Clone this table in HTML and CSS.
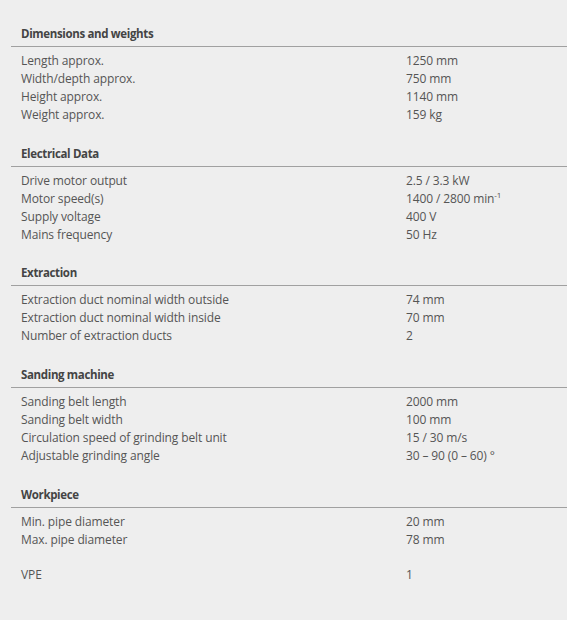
FILE: index.html
```html
<!DOCTYPE html>
<html>
<head>
<meta charset="utf-8">
<link rel="stylesheet" href="styles.css">
</head>
<body>
<div class="specs">
  <section class="group">
    <h3 class="group-title">Dimensions and weights</h3>
    <div class="rows">
      <div class="row"><span class="label">Length approx.</span><span class="value">1250 mm</span></div>
      <div class="row"><span class="label">Width/depth approx.</span><span class="value">750 mm</span></div>
      <div class="row"><span class="label">Height approx.</span><span class="value">1140 mm</span></div>
      <div class="row"><span class="label">Weight approx.</span><span class="value">159 kg</span></div>
    </div>
  </section>
  <section class="group">
    <h3 class="group-title">Electrical Data</h3>
    <div class="rows">
      <div class="row"><span class="label">Drive motor output</span><span class="value">2.5 / 3.3 kW</span></div>
      <div class="row"><span class="label">Motor speed(s)</span><span class="value">1400 / 2800 min<sup>-1</sup></span></div>
      <div class="row"><span class="label">Supply voltage</span><span class="value">400 V</span></div>
      <div class="row"><span class="label">Mains frequency</span><span class="value">50 Hz</span></div>
    </div>
  </section>
  <section class="group">
    <h3 class="group-title">Extraction</h3>
    <div class="rows">
      <div class="row"><span class="label">Extraction duct nominal width outside</span><span class="value">74 mm</span></div>
      <div class="row"><span class="label">Extraction duct nominal width inside</span><span class="value">70 mm</span></div>
      <div class="row"><span class="label">Number of extraction ducts</span><span class="value">2</span></div>
    </div>
  </section>
  <section class="group">
    <h3 class="group-title">Sanding machine</h3>
    <div class="rows">
      <div class="row"><span class="label">Sanding belt length</span><span class="value">2000 mm</span></div>
      <div class="row"><span class="label">Sanding belt width</span><span class="value">100 mm</span></div>
      <div class="row"><span class="label">Circulation speed of grinding belt unit</span><span class="value">15 / 30 m/s</span></div>
      <div class="row"><span class="label">Adjustable grinding angle</span><span class="value">30 – 90 (0 – 60) °</span></div>
    </div>
  </section>
  <section class="group">
    <h3 class="group-title">Workpiece</h3>
    <div class="rows">
      <div class="row"><span class="label">Min. pipe diameter</span><span class="value">20 mm</span></div>
      <div class="row"><span class="label">Max. pipe diameter</span><span class="value">78 mm</span></div>
    </div>
  </section>
  <div class="rows extra">
    <div class="row"><span class="label">VPE</span><span class="value">1</span></div>
  </div>
</div>
</body>
</html>
```
FILE: styles.css
```css
html, body {
  margin: 0;
  padding: 0;
  background: #eeeeee;
}
body {
  font-family: "Open Sans", "Liberation Sans", sans-serif;
  font-size: 12px;
  letter-spacing: -0.12px;
  color: #555555;
  line-height: 18px;
}
.specs {
  padding: 24px 0 40px 11px;
}
.group + .group {
  margin-top: 19.7px;
}
.group-title {
  margin: 0;
  padding: 1px 0 3px 10px;
  font-size: 11.5px;
  letter-spacing: -0.35px;
  font-weight: 700;
  line-height: 18px;
  color: #444444;
  border-bottom: 1px solid #a0a0a0;
}
.rows {
  padding: 5px 0 0 10px;
}
.row {
  display: grid;
  grid-template-columns: 385px 1fr;
}
.value sup {
  font-size: 8px;
  line-height: 0;
  vertical-align: 5px;
}
.extra {
  margin-top: 12px;
}
```
